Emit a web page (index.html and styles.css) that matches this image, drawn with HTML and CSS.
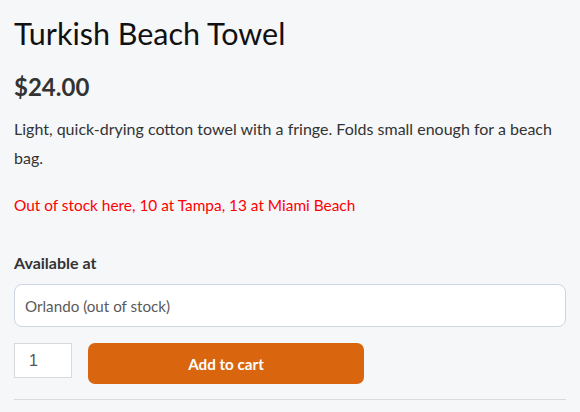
FILE: index.html
```html
<!DOCTYPE html>
<html lang="en">
<head>
    <meta charset="UTF-8">
    <meta name="viewport" content="width=device-width, initial-scale=1.0">
    <title>Turkish Beach Towel</title>
    <link rel="stylesheet" href="styles.css">
</head>
<body>

    <div class="product">
        <h1 class="product-title">Turkish Beach Towel</h1>
        <div class="product-price">$24.00</div>
        <p class="product-desc">Light, quick-drying cotton towel with a fringe. Folds small enough for a beach bag.</p>
        <p class="stock-note">Out of stock here, 10 at Tampa, 13 at Miami Beach</p>

        <label class="store-label" for="store">Available at</label>
        <select id="store" class="store-select">
            <option>Orlando (out of stock)</option>
            <option>Tampa (10 in stock)</option>
            <option>Miami Beach (13 in stock)</option>
        </select>

        <div class="cart-row">
            <input class="qty" type="number" value="1" min="1">
            <button class="add-button">Add to cart</button>
        </div>
        <hr class="divider">
    </div>

</body>
</html>
```

FILE: styles.css
```css
body {
    margin: 0;
    padding: 0 14px;
    background: #f6f7f9;
    font-family: Lato, "Open Sans", sans-serif;
    color: #333;
}

.product {
    display: flex;
    flex-direction: column;
}

.product-title {
    margin: 14px 0 0;
    font-size: 30.5px;
    font-weight: 400;
    line-height: 38px;
    color: #111;
}

.product-price {
    margin-top: 20px;
    font-size: 24px;
    font-weight: 700;
    line-height: 30px;
    color: #333;
}

.product-desc {
    margin: 12px 0 0;
    font-size: 16px;
    line-height: 29px;
}

.stock-note {
    margin: 21px 0 0;
    font-size: 15.4px;
    line-height: 24px;
    color: #ff0000;
}

.store-label {
    margin-top: 34px;
    font-size: 16px;
    font-weight: 700;
    line-height: 24px;
}

.store-select {
    margin-top: 9px;
    height: 43px;
    padding: 0 10px;
    border: 1px solid #cdd5e0;
    border-radius: 8px;
    background: #fff;
    font-family: Lato, sans-serif;
    font-size: 15.2px;
    color: #5a5a5a;
    appearance: none;
    -webkit-appearance: none;
}

.cart-row {
    display: flex;
    align-items: flex-start;
    gap: 16px;
    margin-top: 16px;
}

.qty {
    box-sizing: border-box;
    width: 58px;
    height: 35px;
    margin: 0;
    padding: 0 0 0 14px;
    border: 1px solid #d9d9d9;
    background: #fff;
    font-family: "Liberation Sans", Arial, sans-serif;
    font-size: 16px;
    color: #555;
    -moz-appearance: textfield;
}

.qty::-webkit-inner-spin-button,
.qty::-webkit-outer-spin-button {
    -webkit-appearance: none;
    margin: 0;
}

.add-button {
    width: 276px;
    height: 41px;
    border: none;
    border-radius: 7px;
    background-color: #d9650f;
    color: #fff;
    font-family: Lato, sans-serif;
    font-size: 15.2px;
    font-weight: 700;
    cursor: pointer;
}

.divider {
    margin: 15px 0 0;
    border: none;
    border-top: 1px solid #d8dbe0;
}
```
